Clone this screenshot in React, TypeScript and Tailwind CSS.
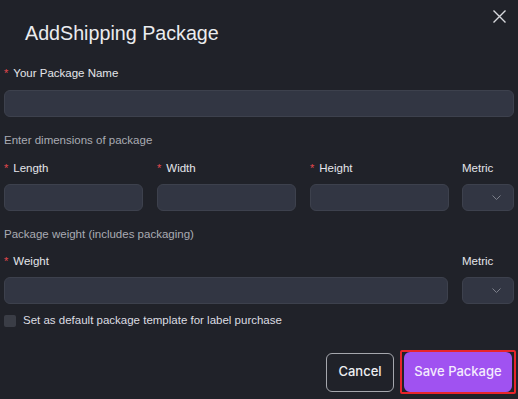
import React, { useState } from "react";

const Label: React.FC<{ text: string; required?: boolean }> = ({ text, required }) => (
  <div className="h-4 flex items-center text-[11.5px] leading-4 text-[#e4e5ea]">
    {required && <span className="text-[#e5484d] mr-[5px] text-[11px]">*</span>}
    <span>{text}</span>
  </div>
);

const Field: React.FC<{ className?: string }> = ({ className }) => (
  <input
    className={
      "h-[27px] rounded-md bg-[#323643] border border-[#3d414d] outline-none px-2 text-[12px] text-white " +
      (className ?? "")
    }
  />
);

const MetricSelect: React.FC = () => (
  <div className="h-[27px] w-[52px] rounded-md bg-[#323643] border border-[#3d414d] flex items-center justify-end pr-[12px]">
    <svg width="9" height="5" viewBox="0 0 9 5" fill="none">
      <path d="M0.5 0.5 L4.5 4.5 L8.5 0.5" stroke="#7d808b" strokeWidth="1" />
    </svg>
  </div>
);

const App: React.FC = () => {
  const [isDefault, setIsDefault] = useState(false); // template checkbox

  return (
    <div
      className="w-[518px] h-[399px] bg-[#202229] px-1 overflow-hidden"
      style={{ fontFamily: "'Liberation Sans', Arial, sans-serif" }}
    >
      {/* Header */}
      <div className="flex items-start justify-between h-[65px]">
        <h2 className="mt-[20px] ml-[21px] text-[19.7px] leading-[26px] text-[#ebecef]">
          AddShipping Package
        </h2>
        <button className="mt-[10px] mr-[8px] text-[#d8d9dd]">
          <svg width="13" height="13" viewBox="0 0 13 13" fill="none">
            <path d="M0.5 0.5 L12.5 12.5 M12.5 0.5 L0.5 12.5" stroke="currentColor" strokeWidth="1.4" />
          </svg>
        </button>
      </div>

      {/* Package name */}
      <Label text="Your Package Name" required />
      <Field className="w-full mt-[9px] block" />

      {/* Dimensions */}
      <p className="mt-[15px] h-4 text-[11.5px] leading-4 text-[#a9abb3]">Enter dimensions of package</p>
      <div className="mt-[12px] flex gap-[14px]">
        <div className="flex flex-col gap-2 w-[139px]">
          <Label text="Length" required />
          <Field className="w-full" />
        </div>
        <div className="flex flex-col gap-2 w-[139px]">
          <Label text="Width" required />
          <Field className="w-full" />
        </div>
        <div className="flex flex-col gap-2 w-[139px]">
          <Label text="Height" required />
          <Field className="w-full" />
        </div>
        <div className="flex flex-col gap-2 w-[52px] ml-[-1px]">
          <Label text="Metric" />
          <MetricSelect />
        </div>
      </div>

      {/* Weight */}
      <p className="mt-[15px] h-4 text-[11.5px] leading-4 text-[#a9abb3]">Package weight (includes packaging)</p>
      <div className="mt-[11px] flex gap-[14px]">
        <div className="flex flex-col gap-2 w-[444px]">
          <Label text="Weight" required />
          <Field className="w-full" />
        </div>
        <div className="flex flex-col gap-2 w-[52px]">
          <Label text="Metric" />
          <MetricSelect />
        </div>
      </div>

      {/* Default template */}
      <label className="mt-[11px] flex items-center gap-[7px] h-3 text-[11.5px] text-[#dcdde2] cursor-pointer">
        <input
          type="checkbox"
          checked={isDefault}
          onChange={(e) => setIsDefault(e.target.checked)}
          className="appearance-none w-3 h-3 bg-[#3a3d46] rounded-[2px]"
        />
        <span>Set as default package template for label purchase</span>
      </label>

      {/* Actions */}
      <div
        className="mt-[23px] flex justify-end items-center gap-[6px] -mr-[2px]"
        style={{ fontFamily: "Inter, 'Liberation Sans', sans-serif" }}
      >
        <button className="h-[39px] w-[68px] rounded-md border border-[#a5a7ad] text-[13px] font-medium text-[#eeeff2] bg-transparent">
          Cancel
        </button>
        <div className="border-2 border-[#e8252b] rounded-[2px] px-[2px]">
          <button className="h-[40px] w-[108px] rounded-md bg-[#a052f1] text-[13px] font-medium text-[#f4ecfe] block">
            Save Package
          </button>
        </div>
      </div>
    </div>
  );
};

export default App;
